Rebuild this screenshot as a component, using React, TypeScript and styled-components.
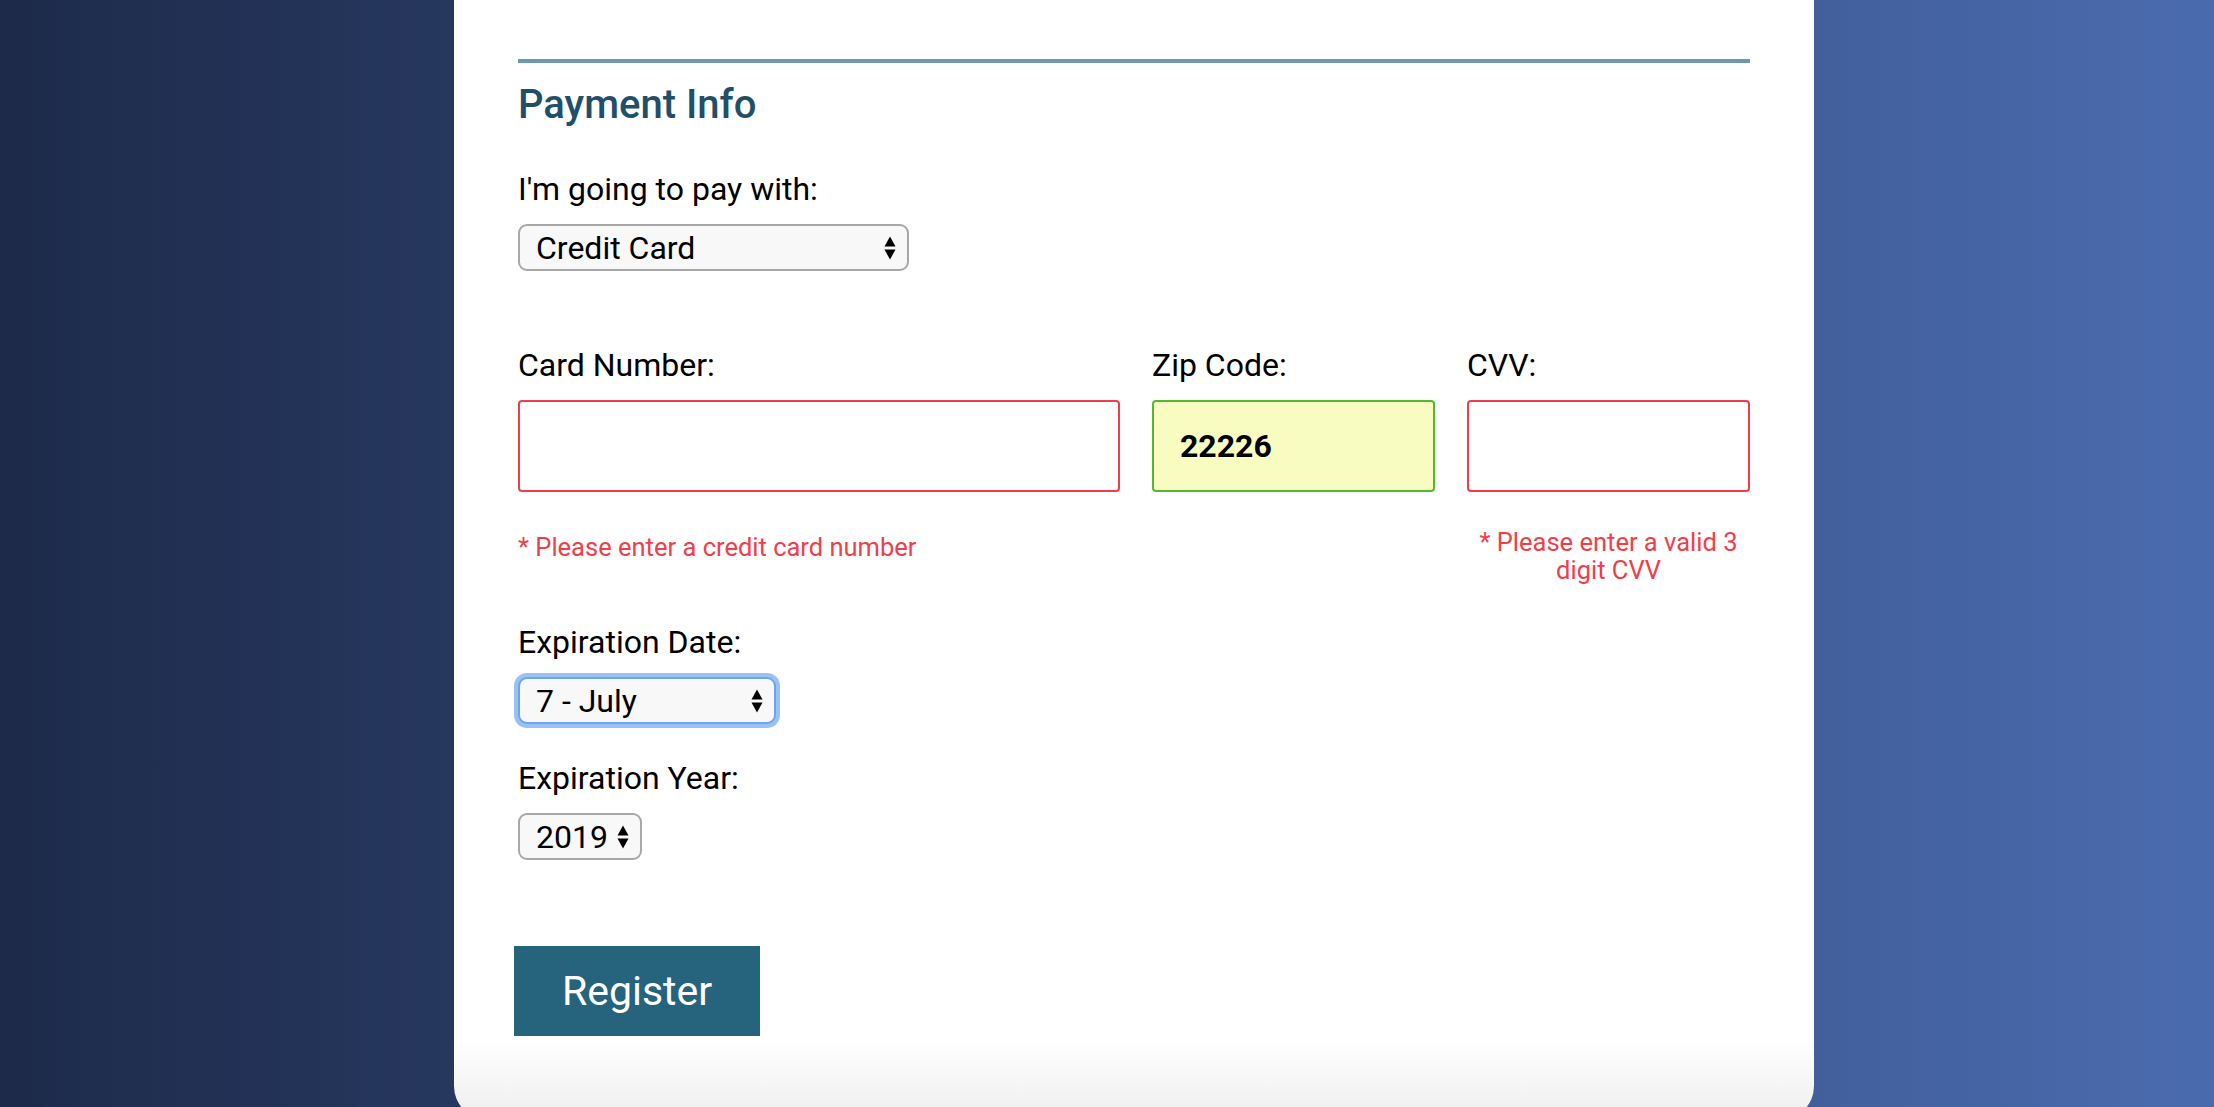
import React from 'react';
import styled, { createGlobalStyle, css } from 'styled-components';

const GlobalStyle = createGlobalStyle`
  html, body {
    margin: 0;
    padding: 0;
  }
  body {
    font-family: Roboto, "Liberation Sans", Arial, sans-serif;
  }
`;

const Page = styled.div`
  height: 100vh;
  overflow: hidden;
  display: flex;
  justify-content: center;
  padding-left: 54px;
  box-sizing: border-box;
  background: linear-gradient(to right, #1d2a4a 0%, #4a6bae 100%);
`;

const Card = styled.form`
  width: 1360px;
  flex-shrink: 0;
  align-self: flex-start;
  box-sizing: border-box;
  padding: 59px 64px 84px;
  border-radius: 0 0 34px 34px;
  background: linear-gradient(to bottom, #ffffff calc(100% - 80px), #eeeeee 100%);
`;

const Rule = styled.hr`
  margin: 0;
  border: none;
  height: 4px;
  background: #6a9bb3;
`;

const Heading = styled.h2`
  margin: 17px 0 0;
  font-size: 40px;
  line-height: 50px;
  font-weight: 500;
  color: #1f4f69;
`;

const Label = styled.label<{ $top?: number }>`
  display: block;
  margin-top: ${(p) => p.$top ?? 0}px;
  font-size: 32px;
  line-height: 36px;
  color: #000;
`;

const SelectWrap = styled.div<{ $width: number; $top?: number }>`
  position: relative;
  width: ${(p) => p.$width}px;
  margin-top: ${(p) => p.$top ?? 17}px;
`;

const Select = styled.select<{ $focused?: boolean }>`
  appearance: none;
  -webkit-appearance: none;
  display: block;
  width: 100%;
  height: 47px;
  box-sizing: border-box;
  padding: 0 30px 0 16px;
  font-family: Roboto, "Liberation Sans", Arial, sans-serif;
  font-size: 32px;
  color: #000;
  background: #f8f8f8;
  border: 2px solid #a7a7a7;
  border-radius: 9px;
  outline: none;

  ${(p) =>
    p.$focused &&
    css`
      border-color: #6ca4ee;
      box-shadow: 0 0 0 4px rgba(128, 178, 244, 0.8);
    `}
`;

const Arrows = styled.svg`
  position: absolute;
  right: 13px;
  top: 50%;
  transform: translateY(-50%);
  pointer-events: none;
`;

const FieldGrid = styled.div`
  display: grid;
  grid-template-columns: 602px minmax(0, 1fr) minmax(0, 1fr);
  column-gap: 32px;
  margin-top: 76px;
`;

const Field = styled.div`
  display: flex;
  flex-direction: column;
  min-width: 0;
`;

const TextInput = styled.input<{ $valid?: boolean }>`
  display: block;
  width: 100%;
  min-width: 0;
  margin-top: 17px;
  height: 92px;
  box-sizing: border-box;
  padding: 0 26px;
  font-family: Roboto, "Liberation Sans", Arial, sans-serif;
  font-size: 32px;
  font-weight: 700;
  color: #000;
  border-radius: 4px;
  outline: none;
  border: 2px solid ${(p) => (p.$valid ? '#52ba2c' : '#ef3e4a')};
  background: ${(p) => (p.$valid ? '#f9fcc1' : '#ffffff')};
`;

const ErrorText = styled.p<{ $top: number; $center?: boolean }>`
  margin: ${(p) => p.$top}px 0 0;
  font-size: 25.5px;
  line-height: 28px;
  color: #f03e4a;
  text-align: ${(p) => (p.$center ? 'center' : 'left')};
`;

const RegisterButton = styled.button`
  display: block;
  margin: 86px 0 0 -4px;
  width: 246px;
  height: 90px;
  border: none;
  border-radius: 0;
  background: #26637c;
  color: #ffffff;
  font-family: Roboto, "Liberation Sans", Arial, sans-serif;
  font-size: 41px;
  cursor: pointer;
`;

const UpDown: React.FC = () => (
  <Arrows width="12" height="24" viewBox="0 0 12 24">
    <path d="M6 0.5 L11.5 10.5 L0.5 10.5 Z" fill="#000" />
    <path d="M0.5 13.5 L11.5 13.5 L6 23.5 Z" fill="#000" />
  </Arrows>
);

interface DropdownProps {
  width: number;
  value: string;
  options: string[];
  top?: number;
  focused?: boolean;
}

const Dropdown: React.FC<DropdownProps> = ({ width, value, options, top, focused }) => (
  <SelectWrap $width={width} $top={top}>
    <Select $focused={focused} defaultValue={value}>
      {options.map((o) => (
        <option key={o} value={o}>
          {o}
        </option>
      ))}
    </Select>
    <UpDown />
  </SelectWrap>
);

const months = [
  '1 - January', '2 - February', '3 - March', '4 - April', '5 - May', '6 - June',
  '7 - July', '8 - August', '9 - September', '10 - October', '11 - November', '12 - December',
];

const years = ['2016', '2017', '2018', '2019', '2020'];

const App: React.FC = () => {
  return (
    <>
      <GlobalStyle />
      <Page>
        <Card onSubmit={(e) => e.preventDefault()}>
          <Rule />
          <Heading>Payment Info</Heading>

          <Label $top={41}>I'm going to pay with:</Label>
          <Dropdown width={391} value="Credit Card" options={['Select Payment Method', 'Credit Card', 'PayPal', 'Bitcoin']} />

          <FieldGrid>
            <Field>
              <Label>Card Number:</Label>
              <TextInput type="text" />
              <ErrorText $top={41}>* Please enter a credit card number</ErrorText>
            </Field>
            <Field>
              <Label>Zip Code:</Label>
              <TextInput type="text" $valid defaultValue="22226" />
            </Field>
            <Field>
              <Label>CVV:</Label>
              <TextInput type="text" />
              <ErrorText $top={36} $center>
                * Please enter a valid 3 digit CVV
              </ErrorText>
            </Field>
          </FieldGrid>

          <Label $top={40}>Expiration Date:</Label>
          <Dropdown width={258} value="7 - July" options={months} focused />

          <Label $top={36}>Expiration Year:</Label>
          <Dropdown width={124} value="2019" options={years} />

          <RegisterButton type="submit">Register</RegisterButton>
        </Card>
      </Page>
    </>
  );
};

export default App;
